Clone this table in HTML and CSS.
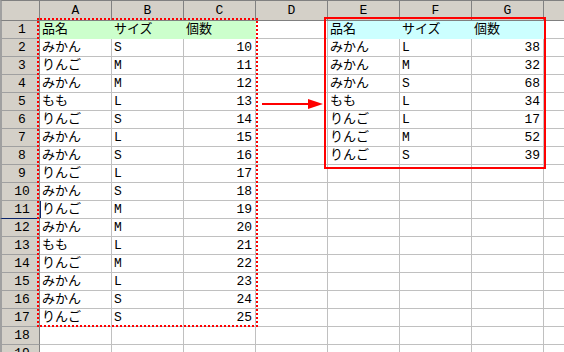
FILE: index.html
```html
<!DOCTYPE html>
<html lang="ja">
<head>
    <meta charset="UTF-8">
    <meta name="viewport" content="width=device-width, initial-scale=1.0">
    <title>Sheet1</title>
    <link rel="stylesheet" href="styles.css">
</head>
<body>
    <div class="sheet" id="sheet">
        <!-- copy marquee around A1:C17 -->
        <div class="marquee"></div>
        <!-- red frame drawn around the summary E1:G8 -->
        <div class="result-box"></div>
        <svg class="arrow" width="62" height="13" viewBox="0 0 62 13">
            <line x1="0" y1="6" x2="48" y2="6" stroke="#ff0000" stroke-width="2"/>
            <polygon points="46,1 61,6 46,11" fill="#ff0000"/>
        </svg>
    </div>

    <script>
        const columns = ['A', 'B', 'C', 'D', 'E', 'F', 'G', ''];

        const sales = [
            ['品名', 'サイズ', '個数'],
            ['みかん', 'S', 10],
            ['りんご', 'M', 11],
            ['みかん', 'M', 12],
            ['もも', 'L', 13],
            ['りんご', 'S', 14],
            ['みかん', 'L', 15],
            ['みかん', 'S', 16],
            ['りんご', 'L', 17],
            ['みかん', 'S', 18],
            ['りんご', 'M', 19],
            ['みかん', 'M', 20],
            ['もも', 'L', 21],
            ['りんご', 'M', 22],
            ['みかん', 'L', 23],
            ['みかん', 'S', 24],
            ['りんご', 'S', 25],
        ];

        const summary = [
            ['品名', 'サイズ', '個数'],
            ['みかん', 'L', 38],
            ['みかん', 'M', 32],
            ['みかん', 'S', 68],
            ['もも', 'L', 34],
            ['りんご', 'L', 17],
            ['りんご', 'M', 52],
            ['りんご', 'S', 39],
        ];

        const sheet = document.getElementById('sheet');

        function addCell(text, className) {
            const cell = document.createElement('div');
            cell.className = className;
            cell.textContent = text;
            sheet.appendChild(cell);
        }

        addCell('', 'corner');
        columns.forEach(name => addCell(name, 'col-head'));

        for (let r = 1; r <= 19; r++) {
            addCell(r, r === 11 ? 'row-head active' : 'row-head');
            for (let c = 0; c < columns.length; c++) {
                let value = '';
                let cls = 'cell';
                if (c < 3 && sales[r - 1]) value = sales[r - 1][c];
                if (c >= 4 && c <= 6 && summary[r - 1]) value = summary[r - 1][c - 4];
                if (typeof value === 'number') cls += ' num';
                if (r === 1 && c < 3) cls += ' fill-green';
                if (r === 1 && c >= 4 && c <= 6) cls += ' fill-cyan';
                if (r === 11 && c === 0) cls += ' current';
                addCell(value, cls);
            }
        }
    </script>
</body>
</html>
```

FILE: styles.css
```css
body {
    margin: 0;
    background-color: #ffffff;
    overflow: hidden;
    font-family: "Liberation Mono", "Noto Sans CJK JP", monospace;
    font-size: 13px;
    color: #000;
}
.sheet {
    position: relative;
    display: grid;
    grid-template-columns: 40px repeat(8, 72px);
    grid-template-rows: 21px repeat(19, 18px);
    width: 616px;
}
.sheet > div {
    box-sizing: border-box;
    overflow: hidden;
    white-space: nowrap;
}
.corner, .col-head, .row-head {
    background-color: #d4d0c8;
    border-right: 1px solid #808080;
    border-bottom: 1px solid #808080;
    text-align: center;
}
.corner, .col-head {
    border-top: 1px solid #808080;
    line-height: 19px;
}
.corner, .row-head {
    border-left: 2px solid #a0a0a0;
}
.row-head {
    border-bottom-color: #a0a0a0;
    line-height: 17px;
    padding-left: 3px;
}
.row-head.active {
    border-bottom-color: #0a246a;
}
.cell {
    border-right: 1px solid #c0c0c0;
    border-bottom: 1px solid #c0c0c0;
    padding: 1px 2px 0;
    line-height: 16px;
}
.cell.num {
    text-align: right;
    padding-right: 3px;
}
.cell.current {
    box-shadow: inset 1px 0 #0a246a;
}
.fill-green {
    background-color: #ccffcc;
    border-color: #ccffcc;
}
.fill-cyan {
    background-color: #ccffff;
    border-color: #ccffff;
}
.marquee {
    position: absolute;
    left: 37px;
    top: 18px;
    width: 221px;
    height: 309px;
    box-sizing: border-box;
    border: 2px dotted #ff0000;
    z-index: 1;
}
.result-box {
    position: absolute;
    left: 324px;
    top: 17px;
    width: 222px;
    height: 152px;
    box-sizing: border-box;
    border: 2px solid #ff0000;
    z-index: 1;
}
.arrow {
    position: absolute;
    left: 262px;
    top: 98px;
    z-index: 1;
}
```
